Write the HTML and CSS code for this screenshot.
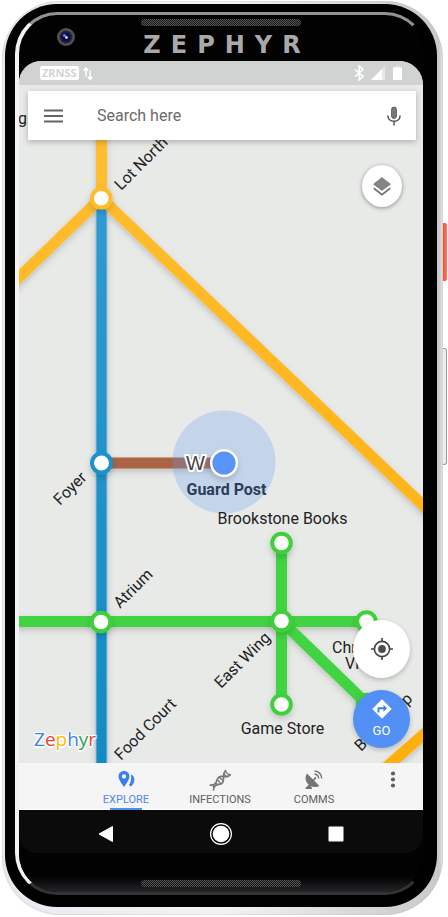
FILE: index.html
```html
<!DOCTYPE html>
<html lang="en">
<head>
<meta charset="utf-8">
<meta name="viewport" content="width=device-width, initial-scale=1">
<title>Zephyr Maps</title>
<link rel="stylesheet" href="styles.css">
</head>
<body>
<div class="device">
  <span class="side-key power"></span>
  <span class="side-key volume"></span>
  <div class="shell">
    <div class="face">
      <header class="forehead">
        <svg class="camera" viewBox="0 0 20 20" aria-hidden="true">
          <circle cx="10" cy="10" r="9" fill="#54504f"/>
          <circle cx="10" cy="10" r="6.4" fill="#25233a"/>
          <circle cx="10" cy="10" r="4.6" fill="#0b0b55"/>
          <circle cx="8.500" cy="8.500" r="1.600" fill="#6c7cc0"/>
          <circle cx="10.500" cy="10.500" r="1.300" fill="#fff"/>
        </svg>
        <div class="crown">
          <span class="speaker"></span>
          <span class="brand">ZEPHYR</span>
        </div>
      </header>

      <main class="screen">
        <section class="map">
          <svg class="routes" viewBox="19 61 404 702" preserveAspectRatio="xMidYMid slice" role="img" aria-label="Transit map">
            <defs>
              <linearGradient id="blue" gradientUnits="userSpaceOnUse" x1="0" y1="198" x2="0" y2="763">
                <stop offset="0" stop-color="#309bd0"/>
                <stop offset="1" stop-color="#118bc4"/>
              </linearGradient>
              <linearGradient id="amber" gradientUnits="userSpaceOnUse" x1="0" y1="140" x2="0" y2="763">
                <stop offset="0" stop-color="#ffbd30"/>
                <stop offset="1" stop-color="#ffaf0a"/>
              </linearGradient>
              <filter id="lift" filterUnits="userSpaceOnUse" x="0" y="40" width="450" height="760">
                <feDropShadow dx="0" dy="3" stdDeviation="3" flood-color="#000" flood-opacity=".18"/>
              </filter>
            </defs>
            <g fill="none" stroke-width="11" filter="url(#lift)">
              <path stroke="#ab6445" d="M101 463H224"/>
              <path stroke="#8fc0d8" stroke-width="12" d="M101.500 200V780"/>
              <path stroke="url(#blue)" stroke-width="10" d="M101.500 200V780"/>
              <path stroke="url(#amber)" d="M101.500 110L101.600 198M101 198L10 286M101 198L440 521.500M375 777L440 720"/>
              <path stroke="#43d342" d="M10 621.500H367M281.500 543V704M281.500 621L367 704"/>
            </g>
            <circle cx="224" cy="462" r="51.500" fill="#5b9bf5" fill-opacity=".26"/>
            <g fill="#fff" stroke-width="4" filter="url(#lift)">
              <circle cx="101.300" cy="198.300" r="9.300" stroke="#ffbb2b"/>
              <circle cx="101.500" cy="463" r="9.500" stroke="#1c92ca"/>
              <g stroke="#3dd03b">
                <circle cx="101" cy="622" r="9.300"/>
                <circle cx="281.500" cy="543" r="9.300"/>
                <circle cx="281.500" cy="621" r="9.300"/>
                <circle cx="281.500" cy="704.500" r="9.300"/>
                <circle cx="366.500" cy="621.500" r="9.300"/>
                <circle cx="367" cy="704" r="9.300"/>
              </g>
              <circle cx="224" cy="463" r="12.800" fill="#5893f8" stroke="#fff" stroke-width="2.400"/>
            </g>
            <g class="labels">
              <text x="18" y="124">g</text>
              <text transform="translate(121 191) rotate(-45)">Lot North</text>
              <text transform="translate(60 506) rotate(-45)">Foyer</text>
              <text transform="translate(120 609) rotate(-45)">Atrium</text>
              <text transform="translate(121 761) rotate(-45)">Food Court</text>
              <text transform="translate(221 689) rotate(-45)">East Wing</text>
              <text x="282.500" y="524" text-anchor="middle">Brookstone Books</text>
              <text x="282.500" y="734" text-anchor="middle">Game Store</text>
              <text x="332" y="653">Chr</text>
              <text x="345" y="669">Vi</text>
              <text transform="translate(361 752) rotate(-45)">B</text>
              <text transform="translate(407 706) rotate(-45)">p</text>
              <text class="here" x="226.500" y="495" text-anchor="middle">Guard Post</text>
              <text class="line-id" x="186" y="470">W</text>
            </g>
          </svg>

          <div class="status">
            <span class="carrier">ZRNSS</span>
            <svg class="arrows" viewBox="0 0 10 14" aria-hidden="true"><path d="M3 10V2M.8 4.200L3 1.500 5.200 4.200M7.200 4V12.500M5 10.200L7.200 13 9.400 10.200" fill="none" stroke="#fff" stroke-width="1.500"/></svg>
            <svg class="radio" viewBox="0 0 48 16" aria-hidden="true">
              <path d="M1 4.500L9 11.500 5.200 15V1L9 4.500 1 11.500" fill="none" stroke="#fff" stroke-width="1.600"/>
              <path d="M17 15L31 1V15z" fill="#e6e7e6"/>
              <path d="M17 15L28 4V15z" fill="#fff"/>
              <path d="M41 1H46V2.500H41z" fill="#e2e3e2"/>
              <path d="M39 2.500H48V15H39z" fill="#fff"/>
            </svg>
          </div>

          <form class="search" role="search">
            <button type="button" class="plain" aria-label="Menu">
              <svg class="menu-icon" viewBox="0 0 19 14" aria-hidden="true"><path d="M0 1.500H19M0 7H19M0 12.500H19" stroke="#666567" stroke-width="1.800"/></svg>
            </button>
            <input type="text" placeholder="Search here" aria-label="Search here">
            <button type="button" class="plain" aria-label="Voice search">
              <svg class="mic-icon" viewBox="0 0 14 20" aria-hidden="true">
                <rect x="4.500" y="1" width="5" height="11.500" rx="2.500" fill="#777" stroke="#555" stroke-width=".8"/>
                <path d="M.9 9.500C1 13.300 3.600 15.300 7 15.300S13 13.300 13.100 9.500M7 15.300V19.500" fill="none" stroke="#555" stroke-width="1.500"/>
              </svg>
            </button>
          </form>

          <button type="button" class="round layers" aria-label="Layers">
            <svg class="layers-icon" viewBox="0 0 18 19" aria-hidden="true"><path d="M9 .5L17.500 7.200 9 13.500 .5 7.200z" fill="#858585"/><path d="M9 .5L17.500 7.200 9 13.500 .5 7.200z" fill="none" stroke="#6f6f6f" stroke-width=".6"/><path d="M.8 11.300L9 17.700 17.200 11.300" fill="none" stroke="#737373" stroke-width="1.800"/></svg>
          </button>
          <div class="actions">
            <button type="button" class="round locate" aria-label="My location">
              <svg class="locate-icon" viewBox="0 0 22 22" aria-hidden="true"><circle cx="11" cy="11" r="7.600" fill="none" stroke="#444" stroke-width="1.600"/><circle cx="11" cy="11" r="3.900" fill="#4b4b4b"/><path d="M11 0V3.500M11 18.500V22M0 11H3.500M18.500 11H22" stroke="#444" stroke-width="1.600"/></svg>
            </button>
            <button type="button" class="round go">
              <svg class="go-icon" viewBox="0 0 20 20" aria-hidden="true"><path d="M10 .3L19.700 10 10 19.700 .3 10z" fill="#fff"/><path d="M6.500 13.500V9.300H12.500" fill="none" stroke="#3f7ff0" stroke-width="1.900"/><path d="M11.500 5.800L15 9.300 11.500 12.800z" fill="#3f7ff0"/></svg>
              GO
            </button>
          </div>
          <div class="watermark"><span class="b">Z</span><span class="r">e</span><span class="y">p</span><span class="b">h</span><span class="g">y</span><span class="r">r</span></div>
        </section>

        <nav class="tabs">
          <button type="button" class="tab active">
            <svg viewBox="0 0 24 22" aria-hidden="true"><path fill="#3a7df0" fill-rule="evenodd" d="M10 2C6.800 2 4.500 4.400 4.500 7.300 4.500 11.200 10 18 10 18S15.500 11.200 15.500 7.300C15.500 4.400 13.200 2 10 2zM10 5.200A2.200 2.200 0 1 1 10 9.600 2.200 2.200 0 1 1 10 5.200z"/><path d="M15.500 16C17.500 13.500 18 10 17.500 6 21 8.500 20.500 13.500 17 17z" fill="#3a7df0" stroke="#3a7df0"/></svg>
            EXPLORE
          </button>
          <button type="button" class="tab">
            <svg viewBox="0 0 24 22" aria-hidden="true"><g fill="none" stroke="#777" stroke-width="1.700"><path d="M1.500 16C7 16.500 8 14.500 9 11 10 7.500 13 7 16 7.500 19 8 22 7 22.500 5"/><path d="M5.500 21.500C5 17 8.500 15.500 12 15.200 16 14.800 15.500 11 15.500 8 15.500 4 17 2 18 1"/><path d="M4.500 16.500L6.500 18.500M7.500 14L10 16M9.500 11L13.500 15M11.500 8.500L15.500 12M15.500 4.500L19 8M17.500 2.500L21.500 6.500" stroke-width="1.200"/></g></svg>
            INFECTIONS
          </button>
          <button type="button" class="tab">
            <svg viewBox="0 0 24 22" aria-hidden="true"><path fill="#757575" d="M5 4.500L11 10.500 13.300 7.800 14.500 9 12.200 11.700 17.500 17C14.500 18.300 11 18.200 8.800 17L10 19V20H3.500V18.800L6.800 15.800C3 12.800 2.800 8 5 4.500z"/><path d="M12.500 5C15 5.300 16.500 7 16.700 9.500M12.500 2C16.500 2.300 19.300 5 19.700 9.500" fill="none" stroke="#757575" stroke-width="1.400"/></svg>
            COMMS
          </button>
          <button type="button" class="tab more" aria-label="More">
            <svg viewBox="0 0 24 22" aria-hidden="true"><g fill="#5f5f5f"><circle cx="13" cy="4.500" r="2.100"/><circle cx="13" cy="10.500" r="2.100"/><circle cx="13" cy="16.500" r="2.100"/></g></svg>
          </button>
        </nav>

        <nav class="system">
          <button type="button" aria-label="Back"><svg viewBox="0 0 24 24" aria-hidden="true"><path d="M5 12L18.500 4.500V19.500z" fill="#fff" stroke="#fff" stroke-linejoin="round"/></svg></button>
          <button type="button" aria-label="Home"><svg viewBox="0 0 24 24" aria-hidden="true"><circle cx="12" cy="12" r="10.400" fill="none" stroke="#fff" stroke-width="1.200"/><circle cx="12" cy="12" r="8.300" fill="#fff"/></svg></button>
          <button type="button" aria-label="Recent apps"><svg viewBox="0 0 24 24" aria-hidden="true"><rect x="4.500" y="4.500" width="15" height="15" rx="1" fill="#fff"/></svg></button>
        </nav>
      </main>

      <div class="chin"><span class="speaker"></span></div>
    </div>
  </div>
</div>
</body>
</html>
```
FILE: styles.css
```css
* {
  box-sizing: border-box;
}

body {
  margin: 0;
  background: #fff;
  font-family: Roboto, "Liberation Sans", sans-serif;
  display: flow-root;
}

button {
  border: 0;
  margin: 0;
  padding: 0;
  background: none;
  font: inherit;
  color: inherit;
}

/* Handset body */
.device {
  position: relative;
  display: flex;
  margin: 1px 5px 2px 2px;
  padding: 3px 6px 8px 3px;
  min-height: calc(100vh - 3px);
  border-radius: 58px;
  background: linear-gradient(90deg, #e9e9f0 0, #f3f3f6 50%, #c9c9cc 99%, #e4e4e6 100%);
  box-shadow: inset 0 0 2px #bbb;
}

.shell {
  flex: 1;
  display: flex;
  min-width: 0;
  padding: 8px 10px 12px;
  border-radius: 52px;
  background: #000;
}

.face {
  flex: 1;
  display: flex;
  flex-direction: column;
  min-width: 0;
  padding: 0 1px 0 0;
  border: solid;
  border-width: 3px 3px 3px 4px;
  border-color: #929294 #000 #333336 #f2f2f5;
  border-radius: 42px;
  background: #020203;
}

.side-key {
  position: absolute;
  right: -4px;
  width: 4px;
}

.power {
  top: 222px;
  height: 58px;
  border-radius: 0 2px 2px 0;
  background: linear-gradient(90deg, #ff4a26, #ff7a70);
}

.volume {
  top: 347px;
  height: 117px;
  border: 1px solid #999;
  border-left: 0;
  border-radius: 0 3px 3px 0;
  background: #eee;
}

.forehead {
  position: relative;
  height: 46px;
}

.camera {
  position: absolute;
  top: 12px;
  left: 37px;
  width: 20px;
  height: 20px;
}

.crown {
  display: flex;
  flex-direction: column;
  align-items: center;
  padding-top: 4px;
}

.speaker {
  display: block;
  width: 160px;
  height: 7px;
  border-radius: 4px;
  background: repeating-conic-gradient(#555 0 25%, #161616 0 50%) 0 0 / 2px 2px;
}

.brand {
  margin-top: 7px;
  padding-left: 12px;
  font: bold 24px/24px "DejaVu Sans", sans-serif;
  letter-spacing: 10px;
  color: #a9a9ab;
}

.chin {
  display: flex;
  justify-content: center;
  height: 39px;
  padding-top: 27px;
  border-radius: 0 0 38px 38px;
  background: linear-gradient(#020203 60%, #252528);
}

/* Display */
.screen {
  flex: 1;
  display: flex;
  flex-direction: column;
  overflow: hidden;
  border-radius: 22px 24px 18px 18px;
  background: #0b0b0b;
}

.map {
  position: relative;
  flex: 1;
  min-height: 520px;
  overflow: hidden;
  background: #e8eae8;
}

.routes {
  position: absolute;
  inset: 0;
  width: 100%;
  height: 100%;
}

.labels {
  font-size: 16px;
  fill: #222;
}

.here {
  font-weight: 700;
  fill: #2b3d58;
}

.line-id {
  font: 20px "Liberation Sans", sans-serif;
  fill: #444;
  stroke: #fff;
  stroke-width: 4px;
  stroke-linejoin: round;
  paint-order: stroke;
}

.status {
  position: relative;
  display: flex;
  align-items: center;
  gap: 4px;
  height: 24px;
  padding: 0 21px;
  background: #d1d3d2;
}

.carrier {
  padding: 0 2px;
  border-radius: 2px;
  background: #fff;
  font: bold 11px/14px "Noto Sans", sans-serif;
  color: #d3d5d4;
}

.arrows {
  width: 10px;
  height: 15px;
}

.radio {
  width: 48px;
  height: 16px;
  margin-left: auto;
}

.search {
  position: relative;
  display: flex;
  align-items: center;
  height: 49px;
  margin: 6px 7px 0 9px;
  background: #fff;
  box-shadow: 0 2px 6px rgba(0, 0, 0, .25);
}

.plain {
  display: flex;
  justify-content: center;
  align-items: center;
  flex: none;
  width: 44px;
  height: 48px;
}

.plain:first-child {
  width: 51px;
}

.search input {
  flex: 1;
  min-width: 0;
  height: 40px;
  padding: 0 0 0 18px;
  border: 0;
  outline: 0;
  background: none;
  font: 16px Roboto, sans-serif;
  color: #444;
}

.search input::placeholder {
  color: #6b6b6b;
  opacity: 1;
}

.menu-icon {
  width: 19px;
  height: 14px;
}

.mic-icon {
  width: 14px;
  height: 20px;
}

.round {
  display: flex;
  flex-direction: column;
  align-items: center;
  justify-content: center;
  width: 57px;
  height: 58px;
  border-radius: 50%;
  background: #fff;
  box-shadow: 0 2px 5px rgba(0, 0, 0, .22);
}

.layers {
  position: absolute;
  top: 104px;
  right: 21px;
  width: 40px;
  height: 42px;
  box-shadow: 0 1px 4px rgba(0, 0, 0, .4);
}

.layers-icon {
  width: 18px;
  height: 19px;
}

.actions {
  position: absolute;
  right: 13px;
  bottom: 15px;
  display: flex;
  flex-direction: column;
  gap: 12px;
}

.locate-icon {
  width: 22px;
  height: 22px;
}

.go {
  background: #5390f5;
  font-size: 13px;
  line-height: 16px;
  color: #fff;
}

.go-icon {
  width: 20px;
  height: 20px;
  margin-bottom: 4px;
}

.watermark {
  position: absolute;
  left: 15px;
  bottom: 12px;
  font: 19px/24px "Open Sans", sans-serif;
  text-shadow: 0 0 2px #fff, 1px 1px 1px #fff, -1px -1px 1px #fff, 1px -1px 1px #fff, -1px 1px 1px #fff, 0 2px 1px #fff;
}

.b { color: #3f80ee; }
.r { color: #ea4335; }
.y { color: #fbbc05; }
.g { color: #2e9f4d; }

.tabs {
  display: grid;
  grid-template-columns: 94fr 94fr 94fr 62fr;
  height: 47px;
  padding-left: 60px;
  border-bottom: 1px solid #fff;
  background: #f5f5f5;
}

.tab {
  position: relative;
  display: flex;
  flex-direction: column;
  align-items: center;
  padding-top: 6px;
  font-size: 11px;
  line-height: 16px;
  color: #5e5e5e;
}

.tab svg {
  width: 24px;
  height: 22px;
  margin-bottom: 1px;
}

.active {
  color: #5288ea;
}

.active::after {
  content: "";
  position: absolute;
  bottom: -1px;
  width: 32px;
  height: 2px;
  background: #4a90e8;
}

.system {
  display: grid;
  grid-template-columns: repeat(3, 1fr);
  height: 43px;
  padding: 5px 29px 0;
}

.system button {
  display: flex;
  justify-content: center;
  align-items: center;
  height: 38px;
}

.system svg {
  width: 24px;
  height: 24px;
}
```
